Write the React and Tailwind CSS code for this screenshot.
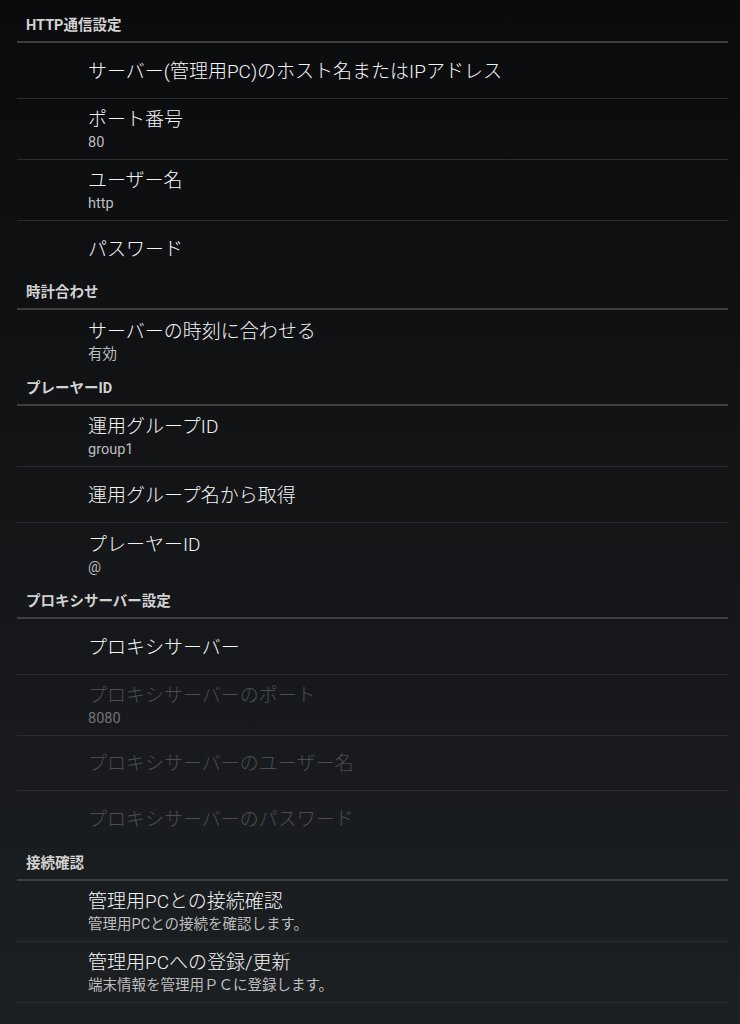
import React from 'react';

const sections = [
  {
    title: 'HTTP通信設定',
    first: true,
    items: [
      { title: 'サーバー(管理用PC)のホスト名またはIPアドレス' },
      { title: 'ポート番号', summary: '80' },
      { title: 'ユーザー名', summary: 'http' },
      { title: 'パスワード' },
    ],
  },
  {
    title: '時計合わせ',
    short: true,
    items: [{ title: 'サーバーの時刻に合わせる', summary: '有効' }],
  },
  {
    title: 'プレーヤーID',
    items: [
      { title: '運用グループID', summary: 'group1' },
      { title: '運用グループ名から取得' },
      { title: 'プレーヤーID', summary: '@' },
    ],
  },
  {
    title: 'プロキシサーバー設定',
    items: [
      { title: 'プロキシサーバー' },
      { title: 'プロキシサーバーのポート', summary: '8080', disabled: true },
      { title: 'プロキシサーバーのユーザー名', disabled: true, tight: true },
      { title: 'プロキシサーバーのパスワード', disabled: true },
    ],
  },
  {
    title: '接続確認',
    items: [
      { title: '管理用PCとの接続確認', summary: '管理用PCとの接続を確認します。' },
      { title: '管理用PCへの登録/更新', summary: '端末情報を管理用ＰＣに登録します。' },
    ],
    lastDivider: true,
  },
];

const PrefItem = ({ item, divider }) => {
  let h = 'h-[61px] pt-[2px]';
  if (!item.summary) h = divider && !item.tight ? 'h-[56px] pt-[2px]' : 'h-[55px] pt-[2px]';
  return (
    <div className={`flex flex-col justify-center pl-[71px] ${h} ${divider ? 'border-b border-[#2a2c2f]' : ''}`}>
      <div className={`text-[19px] leading-[24px] font-light ${item.disabled ? 'text-[#4a4c4f]' : 'text-[#f4f4f4]'}`}>
        {item.title}
      </div>
      {item.summary && (
        <div className={`mt-[2px] text-[14.5px] leading-[18px] ${item.disabled ? 'text-[#707275]' : 'text-[#bdbdbd]'}`}>
          {item.summary}
        </div>
      )}
    </div>
  );
};

export default function App() {
  return (
    <div
      className="min-h-[1024px] w-full bg-linear-to-b from-[#0a0b0d] to-[#1d2023] pl-[17px] pr-[12px]"
      style={{ fontFamily: 'Roboto, "Noto Sans CJK JP", sans-serif' }}
    >
      {sections.map((sec) => (
        <div key={sec.title}>
          <div
            className={`flex items-end border-b-2 border-[#3c3e41] pl-[9px] pb-[7px] ${
              sec.first ? 'h-[43px]' : sec.short ? 'h-[34px]' : 'h-[35px]'
            }`}
          >
            <span className="text-[14.5px] font-bold leading-[16px] text-[#d2d2d2]">{sec.title}</span>
          </div>
          {sec.items.map((item, i) => (
            <PrefItem
              key={item.title}
              item={item}
              divider={i < sec.items.length - 1 || sec.lastDivider}
            />
          ))}
        </div>
      ))}
    </div>
  );
}
